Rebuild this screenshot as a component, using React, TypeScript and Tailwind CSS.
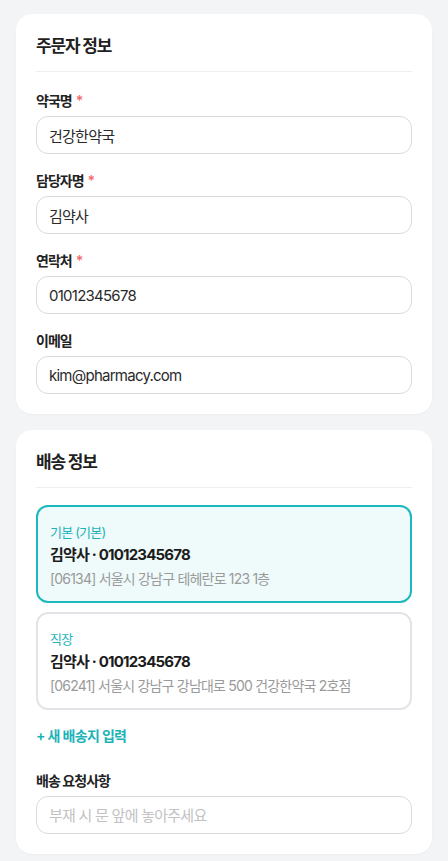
import React, { useState } from 'react';

const font = { fontFamily: 'Inter, "Noto Sans CJK KR", sans-serif' };

type Field = { label: string; value: string; required?: boolean };

const fields: Field[] = [
  { label: '약국명', value: '건강한약국', required: true },
  { label: '담당자명', value: '김약사', required: true },
  { label: '연락처', value: '01012345678', required: true },
  { label: '이메일', value: 'kim@pharmacy.com' },
];

const addresses = [
  { id: 1, tag: '기본 (기본)', name: '김약사 · 01012345678', addr: '[06134] 서울시 강남구 테헤란로 123 1층' },
  { id: 2, tag: '직장', name: '김약사 · 01012345678', addr: '[06241] 서울시 강남구 강남대로 500 건강한약국 2호점' },
];

const Card: React.FC<{ title: string; children: React.ReactNode }> = ({ title, children }) => (
  <section className="bg-white rounded-2xl px-5 pt-5 pb-5 shadow-[0_1px_2px_rgba(0,0,0,0.03)]">
    <h2 className="text-[17px] leading-6 font-bold tracking-[-0.07em] text-[#1f1f1f] pb-[13px] border-b border-[#eeeff1]">
      {title}
    </h2>
    {children}
  </section>
);

const Label: React.FC<{ text: string; required?: boolean }> = ({ text, required }) => (
  <div className="text-[14px] leading-5 font-semibold tracking-[-0.07em] text-[#222] mb-[5px]">
    {text}
    {required && <span className="text-[#f26b6b] ml-1">*</span>}
  </div>
);

const inputCls =
  'w-full h-[38px] rounded-xl border border-[#d9dadd] px-3 text-[15px] tracking-[-0.05em] text-[#2a2a2a] placeholder:text-[#c2c2c4] outline-none';

export default function App() {
  const [selected, setSelected] = useState(1);

  return (
    <div className="min-h-screen bg-[#f3f4f6] px-4 pt-[14px] pb-4 flex flex-col gap-4" style={font}>
      <Card title="주문자 정보">
        <div className="mt-[19px] flex flex-col gap-[17px]">
          {fields.map((f) => (
            <div key={f.label}>
              <Label text={f.label} required={f.required} />
              <input defaultValue={f.value} className={inputCls} />
            </div>
          ))}
        </div>
      </Card>

      <Card title="배송 정보">
        <div className="mt-[17px] flex flex-col gap-[9px]">
          {addresses.map((a) => {
            const on = selected === a.id;
            return (
              <button
                key={a.id}
                onClick={() => setSelected(a.id)}
                className={`text-left rounded-xl border-2 px-3 pt-4 pb-[12px] tracking-[-0.05em] ${
                  on ? 'border-[#1bb8bd] bg-[#effafa]' : 'border-[#e3e4e7] bg-white'
                }`}
              >
                <div className="text-[13px] leading-[18px] text-[#1bb3b8]">{a.tag}</div>
                <div className="mt-[3px] text-[15px] leading-[22px] font-bold text-[#1c1c1c]">{a.name}</div>
                <div className="mt-[3px] text-[14px] leading-5 text-[#9a9a9a]">{a.addr}</div>
              </button>
            );
          })}
        </div>

        <button className="mt-4 text-[14px] leading-5 font-semibold tracking-[-0.05em] text-[#1bb3b8]">
          + 새 배송지 입력
        </button>

        <div className="mt-[24px]">
          <Label text="배송 요청사항" />
          <input placeholder="부재 시 문 앞에 놓아주세요" className={inputCls} />
        </div>
      </Card>
    </div>
  );
}
